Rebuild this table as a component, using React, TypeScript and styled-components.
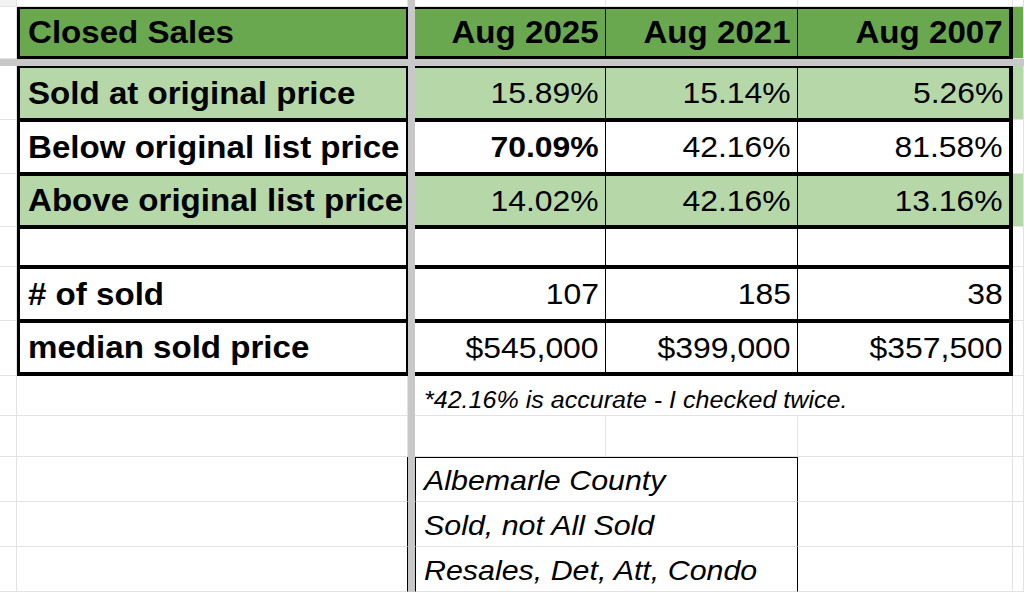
import React from "react";
import styled, { createGlobalStyle, css } from "styled-components";

const GRID = "#e2e2e2";
const FREEZE = "#c8c8c8";
const INK = "#000";
const GREEN = "#6aa84f";
const LIGHT = "#b6d7a8";
const COLS = "17px 391px 7px 191px 192px 215px 1fr";

const Global = createGlobalStyle`
  html, body { margin: 0; padding: 0; background: #fff; }
  body {
    width: 1024px; height: 592px; overflow: hidden;
    font-family: "Liberation Sans", Arial, sans-serif; color: #000;
  }
  #root { width: 1024px; height: 592px; }
`;

const SheetView = styled.div`
  display: flex;
  flex-direction: column;
  width: 1024px;
  height: 592px;
  overflow: hidden;
  background: #fff;
`;

const Row = styled.div<{ $h: number }>`
  display: grid;
  grid-template-columns: ${COLS};
  height: ${(p) => p.$h}px;
  flex: none;
`;

const FreezeRow = styled.div`
  flex: none;
  height: 7px;
  background: ${FREEZE};
`;

const FreezeCol = styled.div`
  background: ${FREEZE};
`;

const Cell = styled.div<{ $bg?: string; $inkRight?: boolean }>`
  box-sizing: border-box;
  background: ${(p) => p.$bg ?? "#fff"};
  border-right: 1px solid ${(p) => (p.$inkRight ? INK : GRID)};
  border-bottom: 1px solid ${GRID};
`;

const tableEdges = css<{ $bg: string }>`
  box-sizing: border-box;
  display: flex;
  align-items: center;
  white-space: nowrap;
  background: ${(p) => p.$bg};
  border-style: solid;
  border-color: ${INK};
`;

const LabelCell = styled.div<{ $bg: string; $top: number; $bottom: number; $right: number }>`
  ${tableEdges};
  justify-content: flex-start;
  padding-left: 8px;
  border-width: ${(p) => `${p.$top}px ${p.$right}px ${p.$bottom}px 3px`};
`;

const ValueCell = styled.div<{ $bg: string; $top: number; $bottom: number; $right: number }>`
  ${tableEdges};
  justify-content: flex-end;
  padding-right: 6px;
  border-width: ${(p) => `${p.$top}px ${p.$right}px ${p.$bottom}px 0`};
`;

const NoteCell = styled.div`
  box-sizing: border-box;
  grid-column: span 3;
  display: flex;
  align-items: center;
  padding: 9px 0 0 9px;
  border-right: 1px solid ${GRID};
  border-bottom: 1px solid ${GRID};
  white-space: nowrap;
`;

const BoxCell = styled.div<{ $first?: boolean }>`
  box-sizing: border-box;
  grid-column: span 2;
  display: flex;
  align-items: center;
  padding: 3px 0 0 8px;
  border-left: 1px solid ${INK};
  border-right: 1px solid ${INK};
  border-top: ${(p) => (p.$first ? `1px solid ${INK}` : "0")};
  border-bottom: 1px solid ${GRID};
  white-space: nowrap;
`;

const stretch = css`
  display: inline-block;
  transform: scaleX(1.085);
  white-space: nowrap;
`;

const LabelText = styled.span`
  ${stretch};
  transform-origin: left center;
  font-weight: 700;
  font-size: 30.5px;
`;

const HeadText = styled.span`
  ${stretch};
  transform-origin: right center;
  font-weight: 700;
  font-size: 30.5px;
`;

const ValueText = styled.span<{ $bold?: boolean }>`
  ${stretch};
  transform-origin: right center;
  font-weight: ${(p) => (p.$bold ? 700 : 400)};
  font-size: 29.4px;
`;

const NoteText = styled.span`
  ${stretch};
  transform-origin: left center;
  font-style: italic;
  font-size: 23.1px;
`;

const BoxText = styled.span`
  ${stretch};
  transform-origin: left center;
  font-style: italic;
  font-size: 28px;
`;

type DataRow = {
  label: string;
  fill: string;
  values: string[];
  bold?: boolean[];
  h: number;
};

const rows: DataRow[] = [
  { label: "Sold at original price", fill: LIGHT, values: ["15.89%", "15.14%", "5.26%"], h: 54 },
  {
    label: "Below original list price",
    fill: "#fff",
    values: ["70.09%", "42.16%", "81.58%"],
    bold: [true, false, false],
    h: 54,
  },
  { label: "Above original list price", fill: LIGHT, values: ["14.02%", "42.16%", "13.16%"], h: 53 },
  { label: "", fill: "#fff", values: ["", "", ""], h: 40 },
  { label: "# of sold", fill: "#fff", values: ["107", "185", "38"], h: 54 },
  { label: "median sold price", fill: "#fff", values: ["$545,000", "$399,000", "$357,500"], h: 55 },
];

const headers = ["Aug 2025", "Aug 2021", "Aug 2007"];
const boxLines = ["Albemarle County", "Sold, not All Sold", "Resales, Det, Att, Condo"];

export default function App() {
  return (
    <>
      <Global />
      <SheetView>
        <Row $h={7}>
          <Cell $bg="#f1f1f1" />
          <Cell />
          <FreezeCol />
          <Cell />
          <Cell />
          <Cell />
          <Cell />
        </Row>

        <Row $h={52}>
          <Cell />
          <LabelCell $bg={GREEN} $top={2} $bottom={3} $right={2}>
            <LabelText>Closed Sales</LabelText>
          </LabelCell>
          <FreezeCol />
          {headers.map((h, i) => (
            <ValueCell key={h} $bg={GREEN} $top={2} $bottom={3} $right={i === 2 ? 4 : 1}>
              <HeadText>{h}</HeadText>
            </ValueCell>
          ))}
          <Cell $bg={GREEN} />
        </Row>

        <FreezeRow />

        {rows.map((r, ri) => {
          const last = ri === rows.length - 1;
          const bottom = last ? 4 : 2;
          return (
            <Row $h={r.h} key={ri}>
              <Cell />
              <LabelCell $bg={r.fill} $top={2} $bottom={bottom} $right={2}>
                {r.label && <LabelText>{r.label}</LabelText>}
              </LabelCell>
              <FreezeCol />
              {r.values.map((v, vi) => (
                <ValueCell key={vi} $bg={r.fill} $top={2} $bottom={bottom} $right={vi === 2 ? 4 : 1}>
                  {v && <ValueText $bold={r.bold?.[vi]}>{v}</ValueText>}
                </ValueCell>
              ))}
              <Cell $bg={r.fill} />
            </Row>
          );
        })}

        <Row $h={40}>
          <Cell />
          <Cell />
          <FreezeCol />
          <NoteCell>
            <NoteText>*42.16% is accurate - I checked twice.</NoteText>
          </NoteCell>
          <Cell />
        </Row>

        <Row $h={41}>
          <Cell />
          <Cell />
          <FreezeCol />
          <Cell />
          <Cell />
          <Cell />
          <Cell />
        </Row>

        {boxLines.map((line, i) => (
          <Row $h={45} key={line}>
            <Cell />
            <Cell $inkRight />
            <FreezeCol />
            <BoxCell $first={i === 0}>
              <BoxText>{line}</BoxText>
            </BoxCell>
            <Cell />
            <Cell />
          </Row>
        ))}
      </SheetView>
    </>
  );
}
